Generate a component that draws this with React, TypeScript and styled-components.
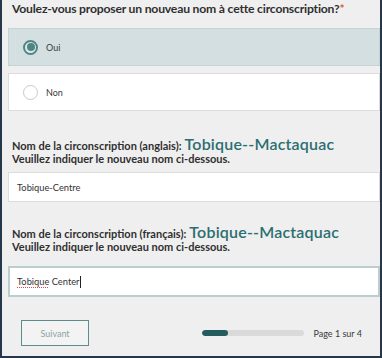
import React from "react";
import styled, { createGlobalStyle } from "styled-components";

const Global = createGlobalStyle`
  html, body { margin: 0; padding: 0; background: #efefef; }
  * { box-sizing: border-box; }
`;

const Frame = styled.div`
  width: 382px;
  height: 358px;
  overflow: hidden;
  background: #efefef;
  border-left: 2px solid #27374a;
  border-right: 2px solid #27374a;
  border-bottom: 2px solid #27374a;
  padding: 0 0 0 6px;
  font-family: Lato, "Open Sans", sans-serif;
  color: #2f2f2f;
  display: flex;
  flex-direction: column;
`;

const Question = styled.div`
  font-size: 12.2px;
  font-weight: 700;
  letter-spacing: -0.2px;
  line-height: 18px;
  padding-left: 4px;
  margin-bottom: 10px;
  white-space: nowrap;
`;

const Required = styled.span`
  color: #d9593a;
`;

const Options = styled.div`
  display: flex;
  flex-direction: column;
  gap: 7px;
`;

const Option = styled.div<{ $selected?: boolean }>`
  height: 38px;
  display: flex;
  align-items: center;
  gap: 8px;
  padding-left: 14px;
  background: ${(p) => (p.$selected ? "#d3dfe0" : "#ffffff")};
  border: 1px solid ${(p) => (p.$selected ? "#c4d4d4" : "#dcdcdc")};
  font-size: 9px;
  color: #3a3a3a;
`;

const Radio = styled.span<{ $checked?: boolean }>`
  width: 15px;
  height: 15px;
  border-radius: 50%;
  border: ${(p) => (p.$checked ? "2px solid #4f8585" : "1.5px solid #c9c9c9")};
  background: ${(p) => (p.$checked ? "#dfe9e9" : "#ffffff")};
  display: flex;
  align-items: center;
  justify-content: center;
  &::after {
    content: "";
    display: ${(p) => (p.$checked ? "block" : "none")};
    width: 8px;
    height: 8px;
    border-radius: 50%;
    background: #4f8585;
  }
`;

const Section = styled.div<{ $top: number }>`
  margin-top: ${(p) => p.$top}px;
`;

const Label = styled.div`
  padding-left: 4px;
  font-weight: 700;
  font-size: 11px;
  color: #2f2f2f;
  white-space: nowrap;
`;

const LabelLine = styled.div`
  line-height: 16px;
  height: 16px;
  display: flex;
  align-items: baseline;
`;

const Name = styled.span`
  font-size: 16px;
  font-weight: 600;
  letter-spacing: 0.2px;
  color: #2b6e70;
  margin-left: 3px;
`;

const Hint = styled.div`
  line-height: 14px;
`;

const Field = styled.div<{ $focused?: boolean }>`
  margin-top: ${(p) => (p.$focused ? "12px" : "6px")};
  height: ${(p) => (p.$focused ? "31px" : "30px")};
  background: #ffffff;
  border: ${(p) => (p.$focused ? "2px solid #bccdcd" : "1px solid #dcdcdc")};
  display: flex;
  align-items: center;
  padding-left: ${(p) => (p.$focused ? "7px" : "8px")};
  font-size: 9.3px;
  color: #333;
  white-space: pre;
`;

const Misspelled = styled.span`
  text-decoration: underline dotted #e04848;
  text-decoration-thickness: 1px;
  text-underline-offset: 2px;
`;

const Caret = styled.span`
  display: inline-block;
  width: 1px;
  height: 12px;
  background: #222;
  margin-left: 0.5px;
`;

const Footer = styled.div`
  margin-top: 23px;
  display: flex;
  align-items: center;
  justify-content: space-between;
  padding: 0 18px 0 13px;
`;

const Button = styled.button`
  width: 68px;
  height: 26px;
  background: #f3f3f3;
  border: 1.5px solid #5d8c8c;
  color: #8ea4a4;
  font-family: Lato, "Open Sans", sans-serif;
  font-size: 9px;
  padding: 0;
`;

const Progress = styled.div`
  display: flex;
  align-items: center;
  gap: 10px;
`;

const Track = styled.div`
  width: 102px;
  height: 6px;
  border-radius: 3px;
  background: #dadada;
  overflow: hidden;
`;

const Fill = styled.div`
  height: 100%;
  border-radius: 3px;
  background: #245c5e;
`;

const PageText = styled.span`
  font-size: 9px;
  color: #3a3a3a;
`;

export default function App() {
  const page = 1;
  const total = 4;
  return (
    <>
      <Global />
      <Frame>
        <Question>
          Voulez-vous proposer un nouveau nom à cette circonscription?<Required>*</Required>
        </Question>
        <Options>
          <Option $selected>
            <Radio $checked />
            Oui
          </Option>
          <Option>
            <Radio />
            Non
          </Option>
        </Options>

        <Section $top={25}>
          <Label>
            <LabelLine>
              Nom de la circonscription (anglais): <Name>Tobique--Mactaquac</Name>
            </LabelLine>
            <Hint>Veuillez indiquer le nouveau nom ci-dessous.</Hint>
          </Label>
          <Field>Tobique-Centre</Field>
        </Section>

        <Section $top={22}>
          <Label>
            <LabelLine>
              Nom de la circonscription (français): <Name>Tobique--Mactaquac</Name>
            </LabelLine>
            <Hint>Veuillez indiquer le nouveau nom ci-dessous.</Hint>
          </Label>
          <Field $focused>
            <Misspelled>Tobique</Misspelled> Center<Caret />
          </Field>
        </Section>

        <Footer>
          <Button>Suivant</Button>
          <Progress>
            <Track>
              <Fill style={{ width: `${(page / total) * 100 + 0.5}%` }} />
            </Track>
            <PageText>
              Page {page} sur {total}
            </PageText>
          </Progress>
        </Footer>
      </Frame>
    </>
  );
}
